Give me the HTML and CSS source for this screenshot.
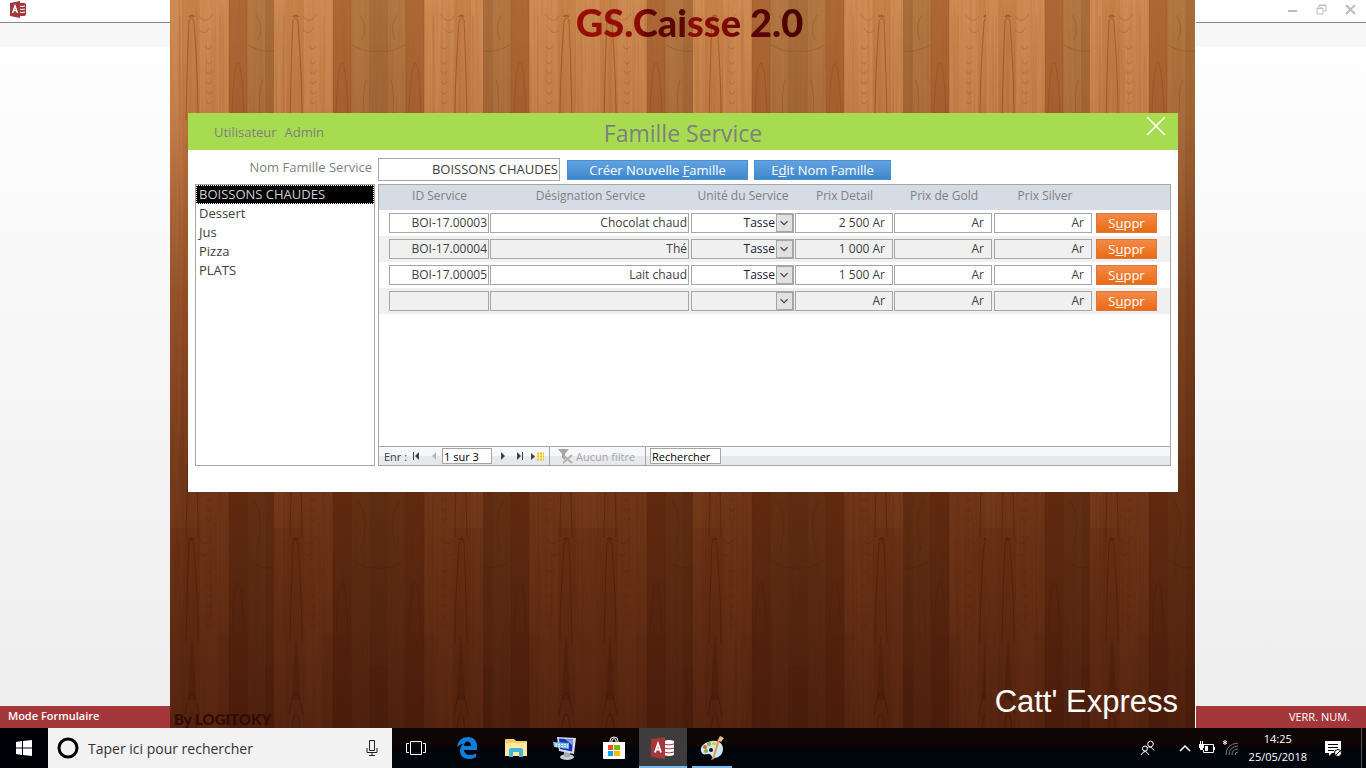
FILE: index.html
```
<!DOCTYPE html>
<html lang="fr">
<head>
    <meta charset="UTF-8">
    <meta name="viewport" content="width=device-width, initial-scale=1.0">
    <title>GS.Caisse 2.0</title>
    <link rel="stylesheet" href="styles.css">
</head>
<body>

    <div class="desktop">
        <div class="side side-left">
            <div class="titlebar">
                <svg width="17" height="17" viewBox="0 0 17 17">
                    <path d="M9 2h5q2 0 2 2v9q0 2-2 2H9z" fill="#a4373a"/>
                    <path d="M9 5q3 1 6 0M9 8q3 1 6 0M9 11q3 1 6 0" stroke="#fff" fill="none"/>
                    <path d="M0 2l10-2v17L0 15z" fill="#a4373a"/>
                    <path d="M2.500 12L5 5l2.500 7M3.500 9.500h3" stroke="#fff" stroke-width="1.500" fill="none"/>
                </svg>
            </div>
            <div class="ribbon"></div>
            <div class="workspace"></div>
            <div class="statusbar"><b>Mode Formulaire</b></div>
        </div>

        <div class="wood">
            <svg class="planks" viewBox="0 0 1025 728" preserveAspectRatio="none">
                <defs>
                    <linearGradient id="shade" x1="0" y1="0" x2="0" y2="1">
                        <stop offset="0" stop-color="#fff"/>
                        <stop offset=".15" stop-color="#f4eae4"/>
                        <stop offset=".4" stop-color="#bb9684"/>
                        <stop offset=".67" stop-color="#906a50"/>
                        <stop offset="1" stop-color="#704836"/>
                    </linearGradient>
                    <filter id="grain" x="0" y="0" width="100%" height="100%">
                        <feTurbulence type="fractalNoise" baseFrequency="0.35 0.008" numOctaves="3" seed="4"/>
                        <feColorMatrix values="0 0 0 0 .3  0 0 0 0 .12  0 0 0 0 .02  1.800 0 0 0 -.7"/>
                    </filter>
                    <g id="knot" fill="none" stroke="#7a3f18" stroke-opacity=".5">
                        <path d="M16 104C17 60 18 25 19 4q3-5 5 2c2 30 4 60 4 98"/>
                        <path d="M19 1q3-3 5 0" stroke-width="2"/>
                        <path d="M29 0q6 10 14-2M29 14q6 6 10-2M35 30q4 6 7 0M36 45q3 6 6 0M36 55q3 6 6 0M36 65q3 6 6 0M36 75q3 6 6 0M36 85q3 6 6 0" stroke-opacity=".25"/>
                        <path d="M10 0v104M50 0v104" stroke-opacity=".15"/>
                    </g>
                    <g id="board">
                        <rect width="60" height="728" fill="#d08c54"/>
                        <rect x="12" width="18" height="728" fill="#c98349"/>
                        <rect x="59" width="18" height="728" fill="#ae6836"/>
                        <rect x="77" width="28" height="728" fill="#b47844"/>
                        <rect x="95" width="10" height="728" fill="#a96e3c"/>
                        <rect y="528" width="30" height="200" fill="#a8582b" fill-opacity=".25"/>
                        <rect x="48" y="633" width="29" height="95" fill="#8a3e18" fill-opacity=".12"/>
                        <rect x="95" y="666" width="10" height="62" fill="#8a3e18" fill-opacity=".2"/>
                        <rect x="30" y="460" width="75" height="268" fill="#a8602f" fill-opacity=".2"/>
                        <path d="M59 0v728M77 0v728" stroke="#8a4a20" stroke-opacity=".3"/>
                        <path d="M62 113q2-50 6-50t6 50M62 633q2-50 6-50t6 50M78 45q14 8 27 6M78 560q14 10 27 8M86 15q8 12 2 25M84 500q12 20 3 50M92 80q-4 15-2 33" fill="none" stroke="#7a3f18" stroke-opacity=".3"/>
                        <use href="#knot" y="16"/>
                        <use href="#knot" y="433"/>
                        <use href="#knot" y="539"/>
                        <path d="M18 700q4-80 4-62 1-10 4 62" fill="#7a3f18" fill-opacity=".3"/>
                        <path d="M15 715q7-45 14 0M18 728q4-30 8 0" fill="none" stroke="#6a3010" stroke-opacity=".4"/>
                    </g>
                </defs>
                <g class="boards">
                    <use href="#board"/>
                    <use href="#board" x="104"/>
                    <use href="#board" transform="translate(313 0) scale(-1 1)"/>
                    <use href="#board" transform="translate(418 0) scale(-1 1)"/>
                    <use href="#board" x="418"/>
                    <use href="#board" x="523"/>
                    <use href="#board" transform="translate(733 0) scale(-1 1)"/>
                    <use href="#board" transform="translate(838 0) scale(-1 1)"/>
                    <use href="#board" x="816"/>
                    <use href="#board" x="920"/>
                    <rect width="1025" height="728" filter="url(#grain)" opacity=".3"/>
                    <rect class="shade" width="1025" height="728" fill="url(#shade)"/>
                </g>
            </svg>

            <h1 class="logo">GS.Caisse 2.0</h1>

            <form class="window">
                <header class="window-head">
                    <div class="user"><span>Utilisateur</span><span>Admin</span></div>
                    <h2>Famille Service</h2>
                    <button type="button" class="close" aria-label="Fermer">
                        <svg width="20" height="20" viewBox="0 0 20 20"><path d="M1 1l18 18M19 1L1 19" stroke="#fff" stroke-width="1.600"/></svg>
                    </button>
                </header>

                <div class="toolbar">
                    <label for="nom">Nom Famille Service</label>
                    <input type="text" id="nom" class="field nom" value="BOISSONS CHAUDES">
                    <button type="button" class="button create">Créer Nouvelle <u>F</u>amille</button>
                    <button type="button" class="button edit">E<u>d</u>it Nom Famille</button>
                </div>

                <div class="panes">
                    <select class="families" size="5" aria-label="Familles">
                        <option selected>BOISSONS CHAUDES</option>
                        <option>Dessert</option>
                        <option>Jus</option>
                        <option>Pizza</option>
                        <option>PLATS</option>
                    </select>

                    <div class="subform">
                        <table class="services">
                            <colgroup>
                                <col class="c-id"><col class="c-name"><col class="c-unit"><col class="c-detail"><col class="c-gold"><col class="c-silver"><col>
                            </colgroup>
                            <thead>
                                <tr>
                                    <th>ID Service</th>
                                    <th>Désignation Service</th>
                                    <th>Unité du Service</th>
                                    <th>Prix Detail</th>
                                    <th>Prix de Gold</th>
                                    <th>Prix Silver</th>
                                    <th></th>
                                </tr>
                            </thead>
                            <tbody>
                                <tr>
                                    <td><input type="text" class="field" aria-label="ID Service" value="BOI-17.00003"></td>
                                    <td><input type="text" class="field" aria-label="Désignation Service" value="Chocolat chaud"></td>
                                    <td><div class="combo"><select class="field" aria-label="Unité du Service"><option>Tasse</option></select><svg width="17" height="18" viewBox="0 0 17 18"><path d="M4 7l4 4 4-4"/></svg></div></td>
                                    <td><input type="text" class="field price" aria-label="Prix Detail" value="2 500 Ar"></td>
                                    <td><input type="text" class="field price" aria-label="Prix de Gold" value="Ar"></td>
                                    <td><input type="text" class="field price" aria-label="Prix Silver" value="Ar"></td>
                                    <td><button type="button" class="button delete">S<u>u</u>ppr</button></td>
                                </tr>
                                <tr>
                                    <td><input type="text" class="field" aria-label="ID Service" value="BOI-17.00004"></td>
                                    <td><input type="text" class="field" aria-label="Désignation Service" value="Thé"></td>
                                    <td><div class="combo"><select class="field" aria-label="Unité du Service"><option>Tasse</option></select><svg width="17" height="18" viewBox="0 0 17 18"><path d="M4 7l4 4 4-4"/></svg></div></td>
                                    <td><input type="text" class="field price" aria-label="Prix Detail" value="1 000 Ar"></td>
                                    <td><input type="text" class="field price" aria-label="Prix de Gold" value="Ar"></td>
                                    <td><input type="text" class="field price" aria-label="Prix Silver" value="Ar"></td>
                                    <td><button type="button" class="button delete">S<u>u</u>ppr</button></td>
                                </tr>
                                <tr>
                                    <td><input type="text" class="field" aria-label="ID Service" value="BOI-17.00005"></td>
                                    <td><input type="text" class="field" aria-label="Désignation Service" value="Lait chaud"></td>
                                    <td><div class="combo"><select class="field" aria-label="Unité du Service"><option>Tasse</option></select><svg width="17" height="18" viewBox="0 0 17 18"><path d="M4 7l4 4 4-4"/></svg></div></td>
                                    <td><input type="text" class="field price" aria-label="Prix Detail" value="1 500 Ar"></td>
                                    <td><input type="text" class="field price" aria-label="Prix de Gold" value="Ar"></td>
                                    <td><input type="text" class="field price" aria-label="Prix Silver" value="Ar"></td>
                                    <td><button type="button" class="button delete">S<u>u</u>ppr</button></td>
                                </tr>
                                <tr>
                                    <td><input type="text" class="field" aria-label="ID Service"></td>
                                    <td><input type="text" class="field" aria-label="Désignation Service"></td>
                                    <td><div class="combo"><select class="field" aria-label="Unité du Service"><option></option></select><svg width="17" height="18" viewBox="0 0 17 18"><path d="M4 7l4 4 4-4"/></svg></div></td>
                                    <td><input type="text" class="field price" aria-label="Prix Detail" value="Ar"></td>
                                    <td><input type="text" class="field price" aria-label="Prix de Gold" value="Ar"></td>
                                    <td><input type="text" class="field price" aria-label="Prix Silver" value="Ar"></td>
                                    <td><button type="button" class="button delete">S<u>u</u>ppr</button></td>
                                </tr>
                            </tbody>
                        </table>

                        <div class="recordbar">
                            <label for="record">Enr :</label>
                            <button type="button" aria-label="Premier"><svg width="8" height="8" viewBox="0 0 8 8"><path d="M1 0h1v8H1zM7 0v8L3 4z"/></svg></button>
                            <button type="button" class="off" aria-label="Précédent"><svg width="8" height="8" viewBox="0 0 8 8"><path d="M6 0v8L2 4z"/></svg></button>
                            <input type="text" id="record" value="1 sur 3">
                            <button type="button" aria-label="Suivant"><svg width="8" height="8" viewBox="0 0 8 8"><path d="M3 0v8l4-4z"/></svg></button>
                            <button type="button" aria-label="Dernier"><svg width="8" height="8" viewBox="0 0 8 8"><path d="M1 0v8l4-4zM6 0h1v8H6z"/></svg></button>
                            <button type="button" class="new" aria-label="Nouveau"><svg width="14" height="9" viewBox="0 0 14 9"><path d="M0 1v7l4-3.500z"/><path d="M6 1h7v7H6z" fill="#fff2a0"/><path d="M6 1.500h7M6 4.500h7M6 7.500h7" stroke="#e8c22e" stroke-width="2" stroke-dasharray="2 1"/></svg></button>
                            <button type="button" class="filter">
                                <svg width="15" height="15" viewBox="0 0 15 15"><path d="M0 0h11L7 5v6L4 9V5z" fill="#a6a6a6"/><path d="M6 7l8 7M14 6l-9 8" stroke="#b3b3b3" stroke-width="2"/></svg>
                                Aucun filtre
                            </button>
                            <input type="text" class="search" aria-label="Rechercher" value="Rechercher">
                        </div>
                    </div>
                </div>
            </form>

            <footer class="credits">
                <span class="author">By LOGITOKY</span>
                <span class="client">Catt' Express</span>
            </footer>
        </div>

        <div class="side side-right">
            <div class="titlebar controls">
                <button type="button" aria-label="Réduire"><svg width="11" height="11" viewBox="0 0 11 11"><path d="M1 7h9" stroke-width="2"/></svg></button>
                <button type="button" aria-label="Restaurer"><svg width="11" height="11" viewBox="0 0 11 11"><path d="M1 4h6v6H1zM3 3V1h7v6H8M1 4.500h6M3 1.500h7"/></svg></button>
                <button type="button" aria-label="Fermer"><svg width="11" height="11" viewBox="0 0 11 11"><path d="M1 1l9 9M10 1l-9 9" stroke-width="2"/></svg></button>
            </div>
            <div class="ribbon"></div>
            <div class="workspace"></div>
            <div class="statusbar">VERR. NUM.</div>
        </div>
    </div>

    <div class="taskbar">
        <button type="button" class="start" aria-label="Démarrer">
            <svg width="16" height="16" viewBox="0 0 16 16"><path d="M0 2l6-1v6.500H0zM7 1l9-1v7.500H7zM0 8.500h6V15l-6-1zM7 8.500h9V16l-9-1z" fill="#fff"/></svg>
        </button>
        <div class="cortana">
            <svg width="22" height="22" viewBox="0 0 22 22"><circle cx="11" cy="11" r="9" fill="none" stroke="#000" stroke-width="3"/></svg>
            <input type="text" aria-label="Recherche" placeholder="Taper ici pour rechercher">
            <svg width="12" height="18" viewBox="0 0 12 18"><path d="M3.500 1.500h5v10h-5zM1 9v4.500h10V9M6 13.500V17M3 16.500h6" fill="none" stroke="#222"/></svg>
        </div>
        <button type="button" class="task view" aria-label="Applications actives">
            <svg width="20" height="14" viewBox="0 0 20 14"><path d="M4.500.5h11v13h-11zM3 2.500H.5v9H3M17 2.500h2.500v9H17" fill="none" stroke="#fff"/></svg>
        </button>
        <button type="button" class="task" aria-label="Edge">
            <svg width="22" height="22" viewBox="0 0 22 22"><path d="M1 10C2 3 7 0 12 0c6 0 9 4 9 9v4H8c0 3 3 5 6 5 2 0 4-.5 6-1.500V20c-2 1.500-5 2-7 2-5 0-9-3-9-8 0-4 2-6 4-7.500-3 .5-5 1.500-7 3.500zM8 9h7c0-3-1.500-4.500-3.500-4.500S8 6 8 9z" fill="#0f7fdc"/></svg>
        </button>
        <button type="button" class="task" aria-label="Explorateur">
            <svg width="22" height="20" viewBox="0 0 22 20"><path d="M0 2q0-1 1-1h8l2 2h11v15H0z" fill="#f3ce62"/><path d="M0 5h22v13H0z" fill="#ffe9a3"/><path d="M4 19v-7q0-2 2-2h10q2 0 2 2v7h-4v-5H8v5z" fill="#46b4dd"/></svg>
        </button>
        <button type="button" class="task" aria-label="Bureau à distance">
            <svg width="24" height="24" viewBox="0 0 24 24"><ellipse cx="14" cy="21" rx="7" ry="3" fill="#c9ccd2"/><path d="M11 16h6v5h-6z" fill="#a7abb3"/><path d="M4 1l19 1-2 16L6 15z" fill="#d8dce6"/><path d="M6 2.500l14 1-1 12L7 13z" fill="#1733b8"/><path d="M12 3l8 .5-.5 6z" fill="#829df0"/><path d="M0 6l16 1v6L1 11z" fill="#78b9ea"/><path d="M2 8l13 1M2 10l13 1" stroke="#fff" stroke-dasharray="2 1"/></svg>
        </button>
        <button type="button" class="task" aria-label="Store">
            <svg width="24" height="24" viewBox="0 0 24 24"><path d="M8 7V5q0-4 4-4t4 4v2M10 7V4q2-3 4 0v3" fill="none" stroke="#fff"/><path d="M1 6h22v16q0 1-1 1H2q-1 0-1-1z" fill="#fff"/><path d="M6 9h5v5H6z" fill="#f25022"/><path d="M12 9h6v5h-6z" fill="#7fba00"/><path d="M6 15h5v5H6z" fill="#00a4ef"/><path d="M12 15h6v5h-6z" fill="#ffb900"/></svg>
        </button>
        <button type="button" class="task active" aria-label="Access">
            <svg width="24" height="22" viewBox="0 0 24 22"><path d="M13 4q5-2 10 0v14q-5 2-10 0z" fill="#fff"/><path d="M13 7q5 2 10 0M13 11q5 2 10 0M13 15q5 2 10 0" stroke="#a4373a" fill="none"/><path d="M0 2l14-2v22L0 20z" fill="#a4373a"/><path d="M4 15.500L7 6.500l3 9M5 12.500h4" stroke="#fff" stroke-width="1.800" fill="none"/></svg>
        </button>
        <button type="button" class="task open" aria-label="Paint">
            <svg width="24" height="24" viewBox="0 0 24 24"><path d="M12 5c7-1 11 3 11 8 0 6-5 9-9 9-3 0-2-4-5-4s-4 1-6 0c-5-4-1-12 9-13z" fill="#cde6f3"/><circle cx="5" cy="11" r="2" fill="#e05a3a"/><circle cx="9" cy="8" r="2" fill="#7cb83c"/><circle cx="14" cy="7.500" r="2" fill="#f0c23c"/><circle cx="6" cy="15" r="2" fill="#7cb83c"/><circle cx="11" cy="14" r="2" fill="#0a1420"/><path d="M20 4l-6 19-3 1 2-4 5-17z" fill="#dd9a4e"/><path d="M18 4l2-4 4 2-3 4z" fill="#e8c48c"/></svg>
        </button>

        <div class="tray">
            <svg width="15" height="16" viewBox="0 0 15 16"><g fill="none" stroke="#fff"><circle cx="10.500" cy="4" r="2.800"/><path d="M6.500 8q4-3 7.500 2.500"/><circle cx="5" cy="8.500" r="2.500"/><path d="M1 15q4-7 8 0"/></g></svg>
            <svg class="up" width="12" height="8" viewBox="0 0 12 8"><path d="M1 7l5-5 5 5" fill="none" stroke="#fff" stroke-width="1.500"/></svg>
            <svg width="16" height="14" viewBox="0 0 16 14"><path d="M5 3.500h9.500v8H4.500V9M15.500 6v3" fill="none" stroke="#fff"/><path d="M6 5h3v5H6zM0 3h5v4H4v2H1V7H0zM1 0h1v3H1zM3 0h1v3H3z" fill="#fff"/></svg>
            <svg class="wifi" width="16" height="16" viewBox="0 0 16 16"><path d="M2 0v5M0 1.500l4 2M4 1.500l-4 2" stroke="#fff"/><path d="M3 15Q3 4 15 3M6 15q0-8 9-9M9 15q0-6 6-6M12 15q0-3 3-3" fill="none" stroke="#777"/></svg>
            <div class="clock"><span>14:25</span><span>25/05/2018</span></div>
            <svg width="17" height="17" viewBox="0 0 17 17"><path d="M0 1h16v12H7l-3 3v-3H0z" fill="#fff"/><path d="M3 4.500h10M3 7.500h10M3 10.500h6" stroke="#000"/><circle cx="13" cy="13" r="3.500" fill="#fff" stroke="#000"/><path d="M11 15l4-4" stroke="#000"/></svg>
        </div>
    </div>

</body>
</html>
```
FILE: styles.css
```
* {
    box-sizing: border-box;
}
body {
    margin: 0;
    height: 100vh;
    display: flex;
    flex-direction: column;
    font-family: "Open Sans", sans-serif;
    font-size: 13px;
    color: #404040;
    overflow: hidden;
}
button, input, select {
    font: inherit;
    color: inherit;
    margin: 0;
}
button {
    padding: 0;
    border: none;
    background: none;
    cursor: pointer;
}
svg {
    display: block;
    flex: none;
}

/* Access window behind the form */
.desktop {
    flex: 1;
    display: flex;
    min-height: 0;
}
.side {
    flex: 0 0 170px;
    display: flex;
    flex-direction: column;
}
.side-right {
    flex-basis: 171px;
    border-left: 1px solid #fff;
}
.titlebar {
    height: 23px;
    padding: 1px 10px;
    background: #fff;
    border-bottom: 1px solid #868a92;
}
.controls {
    display: flex;
    justify-content: flex-end;
    align-items: flex-start;
    gap: 18px;
    padding: 4px 10px;
}
.controls path {
    fill: none;
    stroke: #bdbdbd;
}
.ribbon {
    height: 24px;
    background: #f7f7f7;
}
.workspace {
    flex: 1;
    background: linear-gradient(#fefefe, #eeeeee);
}
.statusbar {
    height: 22px;
    padding: 0 8px;
    background: #a4373a;
    color: #fff;
    font-size: 11px;
    line-height: 20px;
}
.statusbar b {
    font-weight: 600;
}
.side-right .statusbar {
    padding: 0 16px;
    text-align: right;
    line-height: 22px;
}

/* Wood background */
.wood {
    flex: 1;
    position: relative;
    display: flex;
    flex-direction: column;
    background: #6b3014;
}
.planks {
    position: absolute;
    width: 100%;
    height: 100%;
}
.boards {
    isolation: isolate;
}
.shade {
    mix-blend-mode: multiply;
}
.logo {
    position: relative;
    align-self: center;
    height: 113px;
    margin: 0;
    padding: 0 0 0 14px;
    font-family: Lato, sans-serif;
    font-size: 38px;
    font-weight: 900;
    line-height: 44px;
    color: transparent;
    background: linear-gradient(90deg, #9a1006 0%, #8c0c05 32%, #5c0604 36%, #5c0604 50%, #8c0c05 54%, #7c0a05 68%, #5a0404 78%, #4a0202 100%);
    -webkit-background-clip: text;
    background-clip: text;
}
.credits {
    position: relative;
    display: flex;
    justify-content: space-between;
    align-items: flex-end;
    margin-top: auto;
    padding: 0 17px 0 4px;
}
.author {
    font-family: Lato, sans-serif;
    font-size: 15px;
    font-weight: 900;
    line-height: 18px;
    color: #310a04;
}
.client {
    font-family: "Liberation Sans", Arial, sans-serif;
    font-size: 31px;
    line-height: 52px;
    color: #fff;
}

/* Form */
.window {
    position: relative;
    display: flex;
    flex-direction: column;
    min-height: 379px;
    margin: 0 17px 0 18px;
    background: #fff;
}
.window-head {
    display: grid;
    grid-template-columns: 1fr auto 1fr;
    height: 37px;
    background: #a8dc50;
    color: #7f7f7f;
}
.window-head h2 {
    margin: 0;
    font-size: 23px;
    font-weight: 400;
    line-height: 40px;
}
.user {
    display: flex;
    gap: 8px;
    padding-left: 26px;
    line-height: 39px;
}
.close {
    justify-self: end;
    align-self: start;
    padding: 3px 12px;
}
.toolbar {
    display: flex;
    align-items: center;
    gap: 6px;
    padding: 8px 7px 3px;
}
.toolbar label {
    width: 177px;
    padding-bottom: 5px;
    line-height: 18px;
    text-align: right;
    color: #7f7f7f;
}
.field {
    display: block;
    width: 100%;
    height: 20px;
    padding: 0 1px 2px;
    border: 1px solid #a6a6a6;
    border-radius: 0;
    background: transparent;
    text-align: right;
    font-size: 12px;
}
.nom {
    width: 182px;
    height: 23px;
    margin-right: 1px;
    font-size: 13px;
}
.button {
    height: 20px;
    border: 1px solid #4a90d0;
    background: linear-gradient(#62a2e0, #4088cc);
    color: #fff;
    line-height: 18px;
}
.create {
    width: 181px;
}
.edit {
    width: 137px;
}
.delete {
    display: block;
    width: 61px;
    border-color: #d8793c;
    background: linear-gradient(#f58a48, #ea6a14);
}
.panes {
    flex: 1;
    display: flex;
    gap: 3px;
    padding: 0 7px 26px;
}
.families {
    width: 180px;
    padding: 0;
    border: 1px solid #a6a6a6;
    border-radius: 0;
    background: #fff;
    outline: none;
    overflow: hidden;
}
.families option {
    min-height: 19px;
    padding: 0 3px;
    line-height: 19px;
}
.families option:checked {
    background: #000 linear-gradient(#000, #000);
    color: #d0d0d0;
    outline: 1px dotted #fff;
    outline-offset: -1px;
}
.subform {
    flex: 1;
    display: flex;
    flex-direction: column;
    justify-content: space-between;
    border: 1px solid #a6a6a6;
}
.services {
    width: 100%;
    table-layout: fixed;
    border-collapse: collapse;
}
.c-id {
    width: 111px;
}
.c-name {
    width: 201px;
}
.c-unit {
    width: 104px;
}
.c-detail {
    width: 99px;
}
.c-gold {
    width: 100px;
}
.c-silver {
    width: 102px;
}
.services th {
    height: 25px;
    padding: 0 0 3px;
    background: #d6dce5;
    color: #7f7f7f;
    font-size: 12px;
    font-weight: 400;
    line-height: 20px;
}
.services td {
    height: 26px;
    padding: 3px 0;
}
.services th:first-child,
.services td:first-child {
    padding-left: 10px;
}
.services td:nth-child(-n+5) {
    padding-right: 1px;
}
.services td:nth-child(2),
.services td:nth-child(5) {
    padding-right: 2px;
}
.services td:nth-child(6) {
    padding-right: 4px;
}
.services tbody tr:nth-child(even) {
    background: #f0f0f0;
}
.price {
    padding-right: 7px;
}
.combo {
    position: relative;
}
.combo select {
    appearance: none;
    padding-right: 18px;
    text-align-last: right;
    color: #202038;
}
.combo svg {
    position: absolute;
    top: 1px;
    right: 1px;
    border: 1px solid #a6a6a6;
    background: #e1e1e1;
    pointer-events: none;
}
.combo path {
    fill: none;
    stroke: #444;
    stroke-width: 1.3;
}

/* Record navigation */
.recordbar {
    display: flex;
    align-items: center;
    height: 19px;
    padding-left: 5px;
    border-top: 1px solid #a6a6a6;
    background: linear-gradient(#f6f7f9 50%, #e6e8ec 50%);
    font-size: 11px;
}
.recordbar label {
    width: 28px;
}
.recordbar button {
    display: flex;
    align-items: center;
    width: 18px;
    fill: #404040;
}
.recordbar .off {
    width: 12px;
    fill: #b8b8b8;
}
.recordbar input {
    width: 50px;
    height: 16px;
    padding: 0 1px;
    border: 1px solid #a6a6a6;
    background: #fff;
    color: #000;
}
.recordbar input + button {
    margin-left: 6px;
}
.recordbar .new {
    width: 15px;
    margin-left: -3px;
    margin-right: 3px;
}
.recordbar .filter {
    align-self: stretch;
    gap: 3px;
    width: 97px;
    margin: 0 4px 0 0;
    padding-left: 8px;
    border: 1px solid #a6a6a6;
    border-width: 0 1px;
    color: #a6a6a6;
}
.recordbar .search {
    width: 71px;
}

/* Taskbar */
.taskbar {
    display: flex;
    height: 40px;
    background: linear-gradient(#0c0504 19px, #00050b 20px);
}
.start {
    display: flex;
    justify-content: center;
    align-items: center;
    width: 48px;
    background: #000208;
}
.cortana {
    display: flex;
    align-items: center;
    width: 344px;
    padding: 0 14px 0 9px;
    background: #f2f2f2;
}
.cortana input {
    flex: 1;
    min-width: 0;
    padding: 0 9px;
    border: none;
    background: none;
    font-size: 14px;
}
.cortana input::placeholder {
    color: #333;
}
.task {
    display: flex;
    justify-content: center;
    align-items: center;
    width: 48px;
    margin-right: 1px;
    border: solid transparent;
    border-width: 2px 0;
}
.view {
    margin-right: 3px;
}
.active {
    margin-right: 0;
    background: #3e3c3c;
    border-bottom-color: #76b9ed;
}
.open {
    width: 40px;
    margin-left: 5px;
    border-bottom-color: #76b9ed;
}
.tray {
    display: flex;
    align-items: center;
    gap: 8px;
    margin-left: auto;
    margin-right: 4px;
    padding-right: 19px;
    border-right: 1px solid #555;
    color: #fff;
}
.up {
    margin-left: 16px;
}
.clock {
    display: flex;
    flex-direction: column;
    align-items: center;
    font-size: 11px;
    line-height: 18px;
    margin: 0 10px 0 2px;
}
```
